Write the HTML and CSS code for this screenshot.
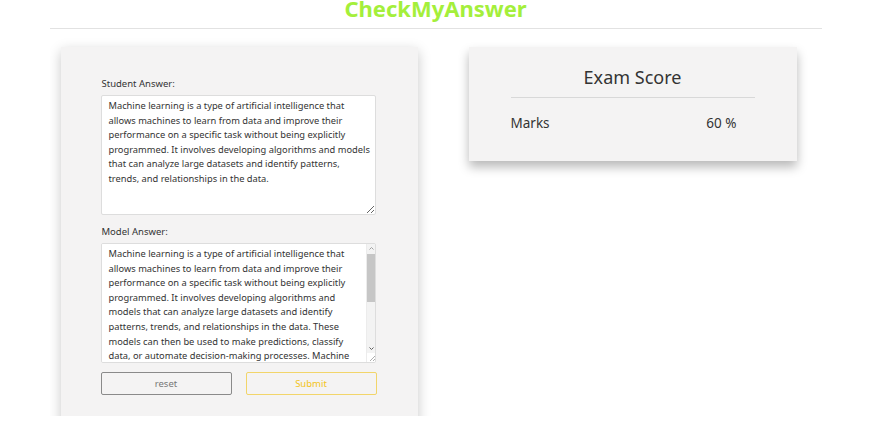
FILE: index.html
```html
<!DOCTYPE html>
<html>
<head>
<meta charset="utf-8">
<link rel="stylesheet" href="styles.css">
</head>
<body>
<div class="page">
  <header class="header">
    <h1 class="title">CheckMyAnswer</h1>
  </header>
  <div class="rule"></div>
  <main class="main">
    <section class="form-card">
      <label class="field-label">Student Answer:</label>
      <textarea class="answer" readonly>Machine learning is a type of artificial intelligence that allows machines to learn from data and improve their performance on a specific task without being explicitly programmed. It involves developing algorithms and models that can analyze large datasets and identify patterns, trends, and relationships in the data.</textarea>
      <label class="field-label model-label">Model Answer:</label>
      <div class="model-box">
        <textarea class="model-text" readonly>Machine learning is a type of artificial intelligence that allows machines to learn from data and improve their performance on a specific task without being explicitly programmed. It involves developing algorithms and models that can analyze large datasets and identify patterns, trends, and relationships in the data. These models can then be used to make predictions, classify data, or automate decision-making processes. Machine learning is used in a wide range of applications, including image recognition, natural language processing and recommendation systems.</textarea>
        <div class="scrollbar">
          <svg class="arrow" width="9" height="9" viewBox="0 0 9 9"><path d="M2.5 5.5 L4.5 3.5 L6.5 5.5" fill="none" stroke="#a0a0a0" stroke-width="1"/></svg>
          <div class="track"><div class="thumb"></div></div>
          <svg class="arrow" width="9" height="9" viewBox="0 0 9 9"><path d="M2.5 3.5 L4.5 5.5 L6.5 3.5" fill="none" stroke="#606060" stroke-width="1"/></svg>
          <svg class="grip" width="9" height="9" viewBox="0 0 9 9"><path d="M8 3 L3 8 M8 6 L6 8" stroke="#999" stroke-width="0.8"/></svg>
        </div>
      </div>
      <div class="buttons">
        <button class="btn reset">reset</button>
        <button class="btn submit">Submit</button>
      </div>
    </section>
    <section class="score-card">
      <h2 class="score-title">Exam Score</h2>
      <div class="score-row">
        <span class="score-name">Marks</span>
        <span class="score-value">60 %</span>
      </div>
    </section>
  </main>
</div>
</body>
</html>
```
FILE: styles.css
```css
* { box-sizing: border-box; }
html, body { margin: 0; padding: 0; background: #fff; }
body {
  font-family: "Noto Sans", "Open Sans", sans-serif;
  color: #333;
  height: 440px;
  overflow: hidden;
}
.page {
  width: 772px;
  margin: 0 auto;
  height: 416px;
  overflow: hidden;
}
.header {
  height: 28px;
  display: flex;
  justify-content: center;
  align-items: flex-end;
}
.title {
  margin: 0;
  font-size: 22px;
  line-height: 22px;
  font-weight: 700;
  color: #a4ef3b;
  padding-bottom: 9px;
}
.rule {
  height: 1px;
  background: #e2e2e2;
}
.main {
  display: flex;
  align-items: flex-start;
  padding-top: 18px;
}
.form-card {
  margin-left: 11px;
  width: 357px;
  height: 420px;
  background: #f4f3f3;
  box-shadow: 0 4px 12px rgba(0,0,0,0.22);
  padding: 30px 41px 0 40px;
  display: flex;
  flex-direction: column;
}
.field-label {
  font-size: 9.5px;
  line-height: 14px;
  color: #333;
  margin-left: 1px;
  margin-bottom: 4px;
}
.model-label { margin-top: 10px; }
.answer, .model-text {
  font-family: "Noto Sans", "Open Sans", sans-serif;
  font-size: 9.3px;
  line-height: 14.6px;
  color: #333;
  background: #fff;
  outline: none;
  padding: 3px 3px 3px 7px;
}
.answer {
  width: 275px;
  height: 120px;
  resize: vertical;
  border: 1px solid #ddd;
  border-radius: 2px;
}
.model-box {
  width: 275px;
  height: 120px;
  display: flex;
  border: 1px solid #ddd;
  border-radius: 2px;
  background: #fff;
  overflow: hidden;
}
.model-text {
  flex: 1;
  min-width: 0;
  height: 100%;
  border: none;
  resize: none;
  overflow: hidden;
  padding-right: 2px;
}
.scrollbar {
  width: 9px;
  display: flex;
  flex-direction: column;
  background: #f3f3f3;
  border-left: 1px solid #ececec;
}
.arrow, .grip { display: block; flex: none; }
.track {
  flex: 1;
  padding-top: 1px;
}
.thumb {
  height: 48px;
  background: #c6c6c6;
}
.grip { background: #fff; }
.buttons {
  display: flex;
  justify-content: space-between;
  margin-top: 9px;
}
.btn {
  width: 131px;
  height: 23px;
  background: transparent;
  border-radius: 2px;
  font-family: "Noto Sans", "Open Sans", sans-serif;
  font-size: 9.5px;
}
.reset { border: 1px solid #8a8a8a; color: #777; }
.submit { border: 1px solid #f2d56a; color: #f3c420; }
.score-card {
  margin-left: 51px;
  width: 328px;
  height: 114px;
  background: #f4f3f3;
  box-shadow: 0 6px 10px rgba(0,0,0,0.28);
  padding: 0 42px;
}
.score-title {
  margin: 0;
  font-size: 18px;
  font-weight: 400;
  text-align: center;
  line-height: 20px;
  padding: 20px 0 10px;
  border-bottom: 1px solid #d8d8d8;
  color: #333;
}
.score-row {
  display: flex;
  justify-content: space-between;
  font-size: 13.5px;
  padding: 16px 18px 0 0;
}
```
